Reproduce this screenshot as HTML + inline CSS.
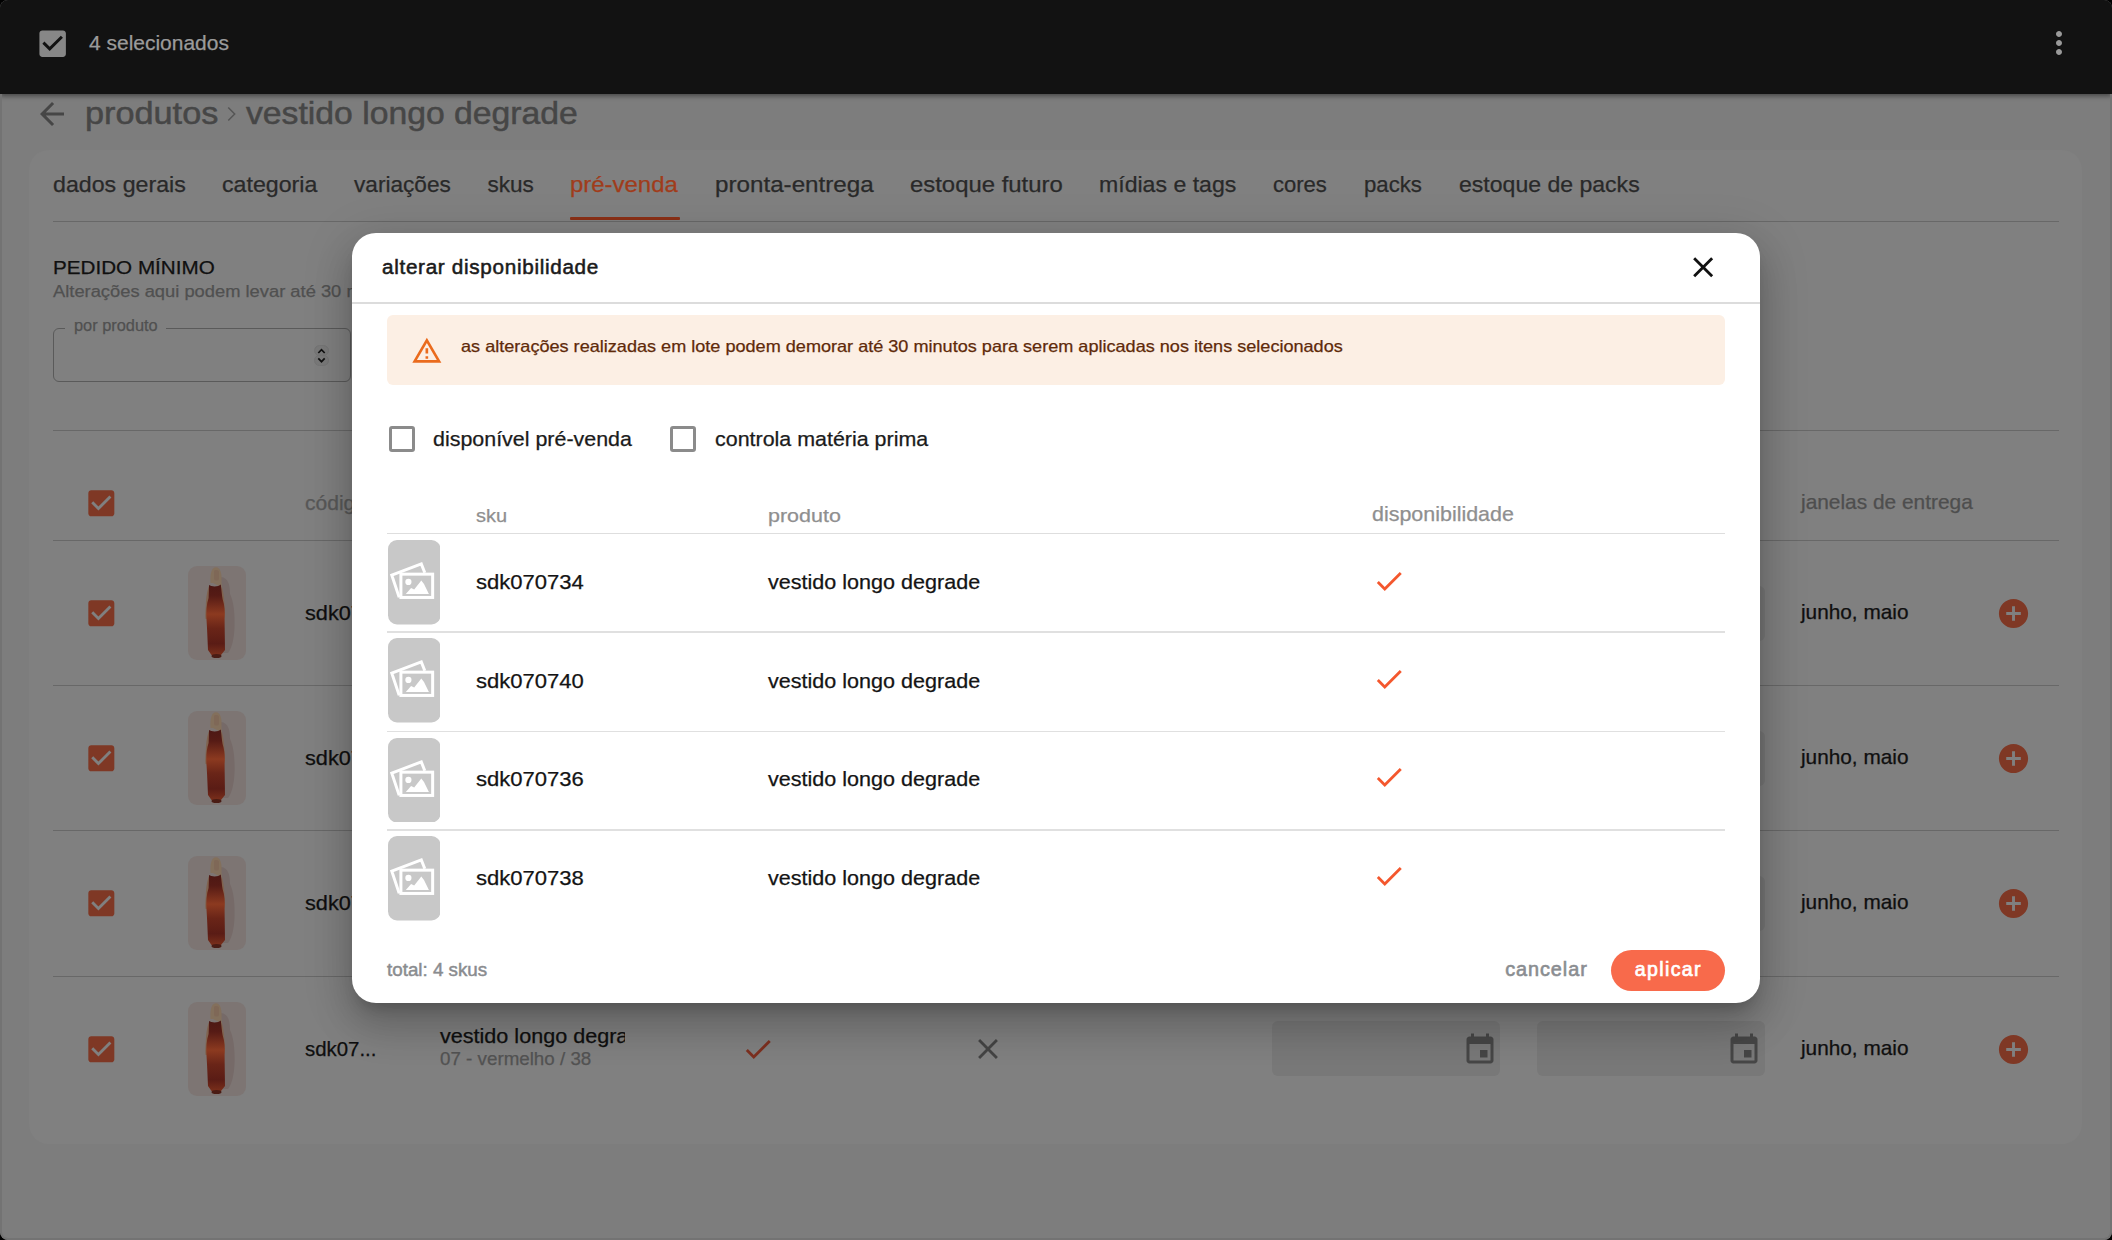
<!DOCTYPE html>
<html><head><meta charset="utf-8"><title>alterar disponibilidade</title>
<style>
html,body{margin:0;padding:0;background:#000;}
body{width:2112px;height:1240px;overflow:hidden;position:relative;font-family:"Liberation Sans",sans-serif;}
#screen{position:absolute;left:0;top:0;width:2112px;height:1240px;background:#7d7d7d;border-radius:8px;overflow:hidden;}
.abs{position:absolute;}
.t{position:absolute;white-space:nowrap;line-height:1;transform-origin:0 0;}
.clip{position:absolute;overflow:hidden;}
</style></head><body><div id="screen">
<div id="page">
<div class="abs" style="left:29px;top:150px;width:2053px;height:994px;background:#808080;border-radius:20px"></div>
<svg class="abs" style="left:34px;top:96px" width="36" height="36" viewBox="0 0 24 24"><path fill="#464646" d="M20 11H7.83l5.59-5.59L12 4l-8 8 8 8 1.41-1.41L7.83 13H20v-2z"/></svg>
<span class="t" style="left:84.80px;top:98.05px;font-size:31.49px;color:#464646;transform:scaleX(1.0881);-webkit-text-stroke:0.5px #464646;">produtos</span>
<span class="t" style="left:246.20px;top:98.05px;font-size:31.49px;color:#464646;transform:scaleX(1.0710);-webkit-text-stroke:0.5px #464646;">vestido longo degrade</span>
<svg class="abs" style="left:220px;top:103px" width="22" height="22" viewBox="0 0 24 24"><path fill="none" stroke="#555" stroke-width="1.6" d="M9 5l7 7-7 7"/></svg>
<span class="t" style="left:53.00px;top:173.60px;font-size:22.57px;color:#292929;transform:scaleX(1.0278);-webkit-text-stroke:0.25px #292929;">dados gerais</span>
<span class="t" style="left:222.00px;top:173.60px;font-size:22.57px;color:#292929;transform:scaleX(1.0269);-webkit-text-stroke:0.25px #292929;">categoria</span>
<span class="t" style="left:354.00px;top:173.60px;font-size:22.57px;color:#292929;transform:scaleX(1.0031);-webkit-text-stroke:0.25px #292929;">variações</span>
<span class="t" style="left:487.50px;top:173.60px;font-size:22.57px;color:#292929;-webkit-text-stroke:0.25px #292929;">skus</span>
<span class="t" style="left:570.00px;top:173.60px;font-size:22.57px;color:#a03c1b;transform:scaleX(1.0609);-webkit-text-stroke:0.25px #a03c1b;">pré-venda</span>
<span class="t" style="left:715.00px;top:173.60px;font-size:22.57px;color:#292929;transform:scaleX(1.0722);-webkit-text-stroke:0.25px #292929;">pronta-entrega</span>
<span class="t" style="left:910.00px;top:173.60px;font-size:22.57px;color:#292929;transform:scaleX(1.0588);-webkit-text-stroke:0.25px #292929;">estoque futuro</span>
<span class="t" style="left:1099.00px;top:173.60px;font-size:22.57px;color:#292929;transform:scaleX(1.0231);-webkit-text-stroke:0.25px #292929;">mídias e tags</span>
<span class="t" style="left:1273.00px;top:173.60px;font-size:22.57px;color:#292929;transform:scaleX(0.9765);-webkit-text-stroke:0.25px #292929;">cores</span>
<span class="t" style="left:1364.00px;top:173.60px;font-size:22.57px;color:#292929;transform:scaleX(0.9831);-webkit-text-stroke:0.25px #292929;">packs</span>
<span class="t" style="left:1459.00px;top:173.60px;font-size:22.57px;color:#292929;transform:scaleX(1.0214);-webkit-text-stroke:0.25px #292929;">estoque de packs</span>
<div class="abs" style="left:53px;top:221px;width:2006px;height:1px;background:#686868"></div>
<div class="abs" style="left:570px;top:217px;width:110px;height:3px;background:#8a3016;border-radius:1px"></div>
<span class="t" style="left:53.30px;top:259.19px;font-size:18.92px;color:#101010;transform:scaleX(1.0918);-webkit-text-stroke:0.25px #101010;">PEDIDO MÍNIMO</span>
<span class="t" style="left:53.30px;top:282.89px;font-size:17.03px;color:#505050;transform:scaleX(1.0770);-webkit-text-stroke:0.25px #505050;">Alterações aqui podem levar até 30 minutos para serem aplicadas</span>
<div class="abs" style="left:53px;top:328px;width:298px;height:54px;border:1.5px solid #5a5a5a;border-radius:6px;box-sizing:border-box"></div>
<div class="abs" style="left:65px;top:318px;width:101px;height:20px;background:#808080"></div>
<span class="t" style="left:73.50px;top:317.80px;font-size:15.95px;color:#505050;transform:scaleX(1.0271);-webkit-text-stroke:0.25px #505050;">por produto</span>
<svg class="abs" style="left:314px;top:345px" width="15" height="21" viewBox="0 0 15 21"><rect x="0.5" y="0.5" width="14" height="10" rx="5" fill="#7a7a7a" stroke="#747474" stroke-width="0.8"/><rect x="0.5" y="10.2" width="14" height="10.3" rx="5" fill="#7a7a7a" stroke="#747474" stroke-width="0.8"/><path d="M4.3 8l3.2-3.3 3.2 3.3M4.3 13.4l3.2 3.3 3.2-3.3" fill="none" stroke="#111" stroke-width="1.7"/></svg>
<div class="abs" style="left:53px;top:430px;width:2006px;height:1px;background:#686868"></div>
<div class="abs" style="left:53px;top:540px;width:2006px;height:1px;background:#686868"></div>
<div class="abs" style="left:53px;top:685px;width:2006px;height:1px;background:#686868"></div>
<div class="abs" style="left:53px;top:830.3px;width:2006px;height:1px;background:#686868"></div>
<div class="abs" style="left:53px;top:975.5px;width:2006px;height:1px;background:#686868"></div>
<svg class="abs" style="left:83.9px;top:485.97px" width="34.66" height="34.66" viewBox="0 0 24 24"><path fill="#7f3825" d="M19 3H5c-1.11 0-2 .9-2 2v14c0 1.1.89 2 2 2h14c1.11 0 2-.9 2-2V5c0-1.1-.89-2-2-2zm-9 14l-5-5 1.41-1.41L10 14.17l7.59-7.59L19 8l-9 9z"/></svg>
<span class="t" style="left:305.40px;top:493.64px;font-size:19.32px;color:#585858;transform:scaleX(1.0896);-webkit-text-stroke:0.25px #585858;">código</span>
<span class="t" style="left:1801.03px;top:492.91px;font-size:19.59px;color:#4e4e4e;transform:scaleX(1.0661);-webkit-text-stroke:0.25px #4e4e4e;">janelas de entrega</span>
<svg class="abs" style="left:83.9px;top:595.97px" width="34.66" height="34.66" viewBox="0 0 24 24"><path fill="#7f3825" d="M19 3H5c-1.11 0-2 .9-2 2v14c0 1.1.89 2 2 2h14c1.11 0 2-.9 2-2V5c0-1.1-.89-2-2-2zm-9 14l-5-5 1.41-1.41L10 14.17l7.59-7.59L19 8l-9 9z"/></svg>
<svg class="abs" style="left:188px;top:566px" width="58" height="94" viewBox="0 0 58 94"><defs><linearGradient id="dg613" x1="0" y1="0" x2="0" y2="1"><stop offset="0" stop-color="#4c1814"/><stop offset="0.16" stop-color="#561b15"/><stop offset="0.42" stop-color="#8c3a20"/><stop offset="0.62" stop-color="#6a2518"/><stop offset="0.84" stop-color="#5a1c15"/><stop offset="1" stop-color="#7a2f1b"/></linearGradient></defs><rect width="58" height="94" rx="9" fill="#7d7573"/><path d="M33 11 C40 12 42 18 42 28 C46 36 47 50 46.5 62 C46 72 44 82 40 87 L35 87 Z" fill="#766a68"/><path d="M32.5 19 C35 22 36 30 36.5 38 C37 44 37 49 36.5 52 L34.5 52 C34.5 45 34 36 32 28 Z" fill="#80634f"/><path d="M21.5 19 C19 24 18 33 17.8 40 C17.4 46 17 50 17.5 53 L19.5 53 C19.5 46 20 37 22 28 Z" fill="#80634f"/><path d="M22.5 17 C22 8 23.5 1.3 28 1.3 C32.5 1.3 34 8 33.5 15 C33.5 19 34 22 33 23 L31 20 L25 17 Z" fill="#83705c"/><path d="M26 5 C27 3.5 30 3.5 31 5.5 L31 13 C30 15 27 15 26 13 Z" fill="#7f6857"/><path d="M21 19 C23.5 21 30.5 21 32.8 18.5 C33.5 24 34 30 34.6 33 C36.8 40 37 46 36.6 52 C36.6 62 37 75 37 84 L33 89 L23.5 89 L20 84 C19.6 72 19 62 18.6 55 C17.8 46 18.5 38 20.6 32 C20.8 27 21 23 21 19 Z" fill="url(#dg613)"/><ellipse cx="28.5" cy="90" rx="5" ry="2" fill="#4a1c14"/></svg>
<span class="t" style="left:1801.03px;top:602.93px;font-size:19.46px;color:#0f0f0f;transform:scaleX(1.0691);-webkit-text-stroke:0.25px #0f0f0f;">junho, maio</span>
<svg class="abs" style="left:1996.1px;top:595.50px" width="35.04" height="35.04" viewBox="0 0 24 24"><path fill="#7f3825" d="M12 2C6.48 2 2 6.48 2 12s4.48 10 10 10 10-4.48 10-10S17.52 2 12 2zm5 11h-4v4h-2v-4H7v-2h4V7h2v4h4v2z"/></svg>
<svg class="abs" style="left:83.9px;top:740.97px" width="34.66" height="34.66" viewBox="0 0 24 24"><path fill="#7f3825" d="M19 3H5c-1.11 0-2 .9-2 2v14c0 1.1.89 2 2 2h14c1.11 0 2-.9 2-2V5c0-1.1-.89-2-2-2zm-9 14l-5-5 1.41-1.41L10 14.17l7.59-7.59L19 8l-9 9z"/></svg>
<svg class="abs" style="left:188px;top:711px" width="58" height="94" viewBox="0 0 58 94"><defs><linearGradient id="dg758" x1="0" y1="0" x2="0" y2="1"><stop offset="0" stop-color="#4c1814"/><stop offset="0.16" stop-color="#561b15"/><stop offset="0.42" stop-color="#8c3a20"/><stop offset="0.62" stop-color="#6a2518"/><stop offset="0.84" stop-color="#5a1c15"/><stop offset="1" stop-color="#7a2f1b"/></linearGradient></defs><rect width="58" height="94" rx="9" fill="#7d7573"/><path d="M33 11 C40 12 42 18 42 28 C46 36 47 50 46.5 62 C46 72 44 82 40 87 L35 87 Z" fill="#766a68"/><path d="M32.5 19 C35 22 36 30 36.5 38 C37 44 37 49 36.5 52 L34.5 52 C34.5 45 34 36 32 28 Z" fill="#80634f"/><path d="M21.5 19 C19 24 18 33 17.8 40 C17.4 46 17 50 17.5 53 L19.5 53 C19.5 46 20 37 22 28 Z" fill="#80634f"/><path d="M22.5 17 C22 8 23.5 1.3 28 1.3 C32.5 1.3 34 8 33.5 15 C33.5 19 34 22 33 23 L31 20 L25 17 Z" fill="#83705c"/><path d="M26 5 C27 3.5 30 3.5 31 5.5 L31 13 C30 15 27 15 26 13 Z" fill="#7f6857"/><path d="M21 19 C23.5 21 30.5 21 32.8 18.5 C33.5 24 34 30 34.6 33 C36.8 40 37 46 36.6 52 C36.6 62 37 75 37 84 L33 89 L23.5 89 L20 84 C19.6 72 19 62 18.6 55 C17.8 46 18.5 38 20.6 32 C20.8 27 21 23 21 19 Z" fill="url(#dg758)"/><ellipse cx="28.5" cy="90" rx="5" ry="2" fill="#4a1c14"/></svg>
<span class="t" style="left:1801.03px;top:747.93px;font-size:19.46px;color:#0f0f0f;transform:scaleX(1.0691);-webkit-text-stroke:0.25px #0f0f0f;">junho, maio</span>
<svg class="abs" style="left:1996.1px;top:740.50px" width="35.04" height="35.04" viewBox="0 0 24 24"><path fill="#7f3825" d="M12 2C6.48 2 2 6.48 2 12s4.48 10 10 10 10-4.48 10-10S17.52 2 12 2zm5 11h-4v4h-2v-4H7v-2h4V7h2v4h4v2z"/></svg>
<svg class="abs" style="left:83.9px;top:885.97px" width="34.66" height="34.66" viewBox="0 0 24 24"><path fill="#7f3825" d="M19 3H5c-1.11 0-2 .9-2 2v14c0 1.1.89 2 2 2h14c1.11 0 2-.9 2-2V5c0-1.1-.89-2-2-2zm-9 14l-5-5 1.41-1.41L10 14.17l7.59-7.59L19 8l-9 9z"/></svg>
<svg class="abs" style="left:188px;top:856px" width="58" height="94" viewBox="0 0 58 94"><defs><linearGradient id="dg903" x1="0" y1="0" x2="0" y2="1"><stop offset="0" stop-color="#4c1814"/><stop offset="0.16" stop-color="#561b15"/><stop offset="0.42" stop-color="#8c3a20"/><stop offset="0.62" stop-color="#6a2518"/><stop offset="0.84" stop-color="#5a1c15"/><stop offset="1" stop-color="#7a2f1b"/></linearGradient></defs><rect width="58" height="94" rx="9" fill="#7d7573"/><path d="M33 11 C40 12 42 18 42 28 C46 36 47 50 46.5 62 C46 72 44 82 40 87 L35 87 Z" fill="#766a68"/><path d="M32.5 19 C35 22 36 30 36.5 38 C37 44 37 49 36.5 52 L34.5 52 C34.5 45 34 36 32 28 Z" fill="#80634f"/><path d="M21.5 19 C19 24 18 33 17.8 40 C17.4 46 17 50 17.5 53 L19.5 53 C19.5 46 20 37 22 28 Z" fill="#80634f"/><path d="M22.5 17 C22 8 23.5 1.3 28 1.3 C32.5 1.3 34 8 33.5 15 C33.5 19 34 22 33 23 L31 20 L25 17 Z" fill="#83705c"/><path d="M26 5 C27 3.5 30 3.5 31 5.5 L31 13 C30 15 27 15 26 13 Z" fill="#7f6857"/><path d="M21 19 C23.5 21 30.5 21 32.8 18.5 C33.5 24 34 30 34.6 33 C36.8 40 37 46 36.6 52 C36.6 62 37 75 37 84 L33 89 L23.5 89 L20 84 C19.6 72 19 62 18.6 55 C17.8 46 18.5 38 20.6 32 C20.8 27 21 23 21 19 Z" fill="url(#dg903)"/><ellipse cx="28.5" cy="90" rx="5" ry="2" fill="#4a1c14"/></svg>
<span class="t" style="left:1801.03px;top:892.93px;font-size:19.46px;color:#0f0f0f;transform:scaleX(1.0691);-webkit-text-stroke:0.25px #0f0f0f;">junho, maio</span>
<svg class="abs" style="left:1996.1px;top:885.50px" width="35.04" height="35.04" viewBox="0 0 24 24"><path fill="#7f3825" d="M12 2C6.48 2 2 6.48 2 12s4.48 10 10 10 10-4.48 10-10S17.52 2 12 2zm5 11h-4v4h-2v-4H7v-2h4V7h2v4h4v2z"/></svg>
<svg class="abs" style="left:83.9px;top:1031.97px" width="34.66" height="34.66" viewBox="0 0 24 24"><path fill="#7f3825" d="M19 3H5c-1.11 0-2 .9-2 2v14c0 1.1.89 2 2 2h14c1.11 0 2-.9 2-2V5c0-1.1-.89-2-2-2zm-9 14l-5-5 1.41-1.41L10 14.17l7.59-7.59L19 8l-9 9z"/></svg>
<svg class="abs" style="left:188px;top:1002px" width="58" height="94" viewBox="0 0 58 94"><defs><linearGradient id="dg1049" x1="0" y1="0" x2="0" y2="1"><stop offset="0" stop-color="#4c1814"/><stop offset="0.16" stop-color="#561b15"/><stop offset="0.42" stop-color="#8c3a20"/><stop offset="0.62" stop-color="#6a2518"/><stop offset="0.84" stop-color="#5a1c15"/><stop offset="1" stop-color="#7a2f1b"/></linearGradient></defs><rect width="58" height="94" rx="9" fill="#7d7573"/><path d="M33 11 C40 12 42 18 42 28 C46 36 47 50 46.5 62 C46 72 44 82 40 87 L35 87 Z" fill="#766a68"/><path d="M32.5 19 C35 22 36 30 36.5 38 C37 44 37 49 36.5 52 L34.5 52 C34.5 45 34 36 32 28 Z" fill="#80634f"/><path d="M21.5 19 C19 24 18 33 17.8 40 C17.4 46 17 50 17.5 53 L19.5 53 C19.5 46 20 37 22 28 Z" fill="#80634f"/><path d="M22.5 17 C22 8 23.5 1.3 28 1.3 C32.5 1.3 34 8 33.5 15 C33.5 19 34 22 33 23 L31 20 L25 17 Z" fill="#83705c"/><path d="M26 5 C27 3.5 30 3.5 31 5.5 L31 13 C30 15 27 15 26 13 Z" fill="#7f6857"/><path d="M21 19 C23.5 21 30.5 21 32.8 18.5 C33.5 24 34 30 34.6 33 C36.8 40 37 46 36.6 52 C36.6 62 37 75 37 84 L33 89 L23.5 89 L20 84 C19.6 72 19 62 18.6 55 C17.8 46 18.5 38 20.6 32 C20.8 27 21 23 21 19 Z" fill="url(#dg1049)"/><ellipse cx="28.5" cy="90" rx="5" ry="2" fill="#4a1c14"/></svg>
<span class="t" style="left:1801.03px;top:1038.93px;font-size:19.46px;color:#0f0f0f;transform:scaleX(1.0691);-webkit-text-stroke:0.25px #0f0f0f;">junho, maio</span>
<svg class="abs" style="left:1996.1px;top:1031.50px" width="35.04" height="35.04" viewBox="0 0 24 24"><path fill="#7f3825" d="M12 2C6.48 2 2 6.48 2 12s4.48 10 10 10 10-4.48 10-10S17.52 2 12 2zm5 11h-4v4h-2v-4H7v-2h4V7h2v4h4v2z"/></svg>
<span class="t" style="left:305.00px;top:603.50px;font-size:19.73px;color:#0f0f0f;transform:scaleX(1.0996);-webkit-text-stroke:0.25px #0f0f0f;">sdk070734</span>
<span class="t" style="left:305.00px;top:748.50px;font-size:19.73px;color:#0f0f0f;transform:scaleX(1.0996);-webkit-text-stroke:0.25px #0f0f0f;">sdk070734</span>
<span class="t" style="left:305.00px;top:893.50px;font-size:19.73px;color:#0f0f0f;transform:scaleX(1.0996);-webkit-text-stroke:0.25px #0f0f0f;">sdk070734</span>
<span class="t" style="left:305.00px;top:1039.53px;font-size:19.46px;color:#0f0f0f;transform:scaleX(1.0498);-webkit-text-stroke:0.25px #0f0f0f;">sdk07...</span>
<div class="clip" style="left:439.00px;top:1016.53px;width:186.00px;height:37.24px"><span class="t" style="left:1.00px;top:10px;font-size:19.46px;color:#0f0f0f;transform:scaleX(1.1100);-webkit-text-stroke:0.25px #0f0f0f;">vestido longo degrade</span></div>
<span class="t" style="left:440.00px;top:1049.56px;font-size:18.24px;color:#535353;transform:scaleX(1.0293);-webkit-text-stroke:0.25px #535353;">07 - vermelho / 38</span>
<svg class="abs" style="left:741px;top:1032px" width="34" height="34" viewBox="0 0 24 24"><path fill="#7d3020" d="M9 16.17L4.83 12l-1.42 1.41L9 19 21 7l-1.41-1.41z"/></svg>
<svg class="abs" style="left:971px;top:1032px" width="34" height="34" viewBox="0 0 24 24"><path fill="#444" d="M19 6.41L17.59 5 12 10.59 6.41 5 5 6.41 10.59 12 5 17.59 6.41 19 12 13.41 17.59 19 19 17.59 13.41 12z"/></svg>
<div class="abs" style="left:1537px;top:585.5px;width:228px;height:55px;background:#787878;border-radius:6px"></div>
<div class="abs" style="left:1537px;top:730.5px;width:228px;height:55px;background:#787878;border-radius:6px"></div>
<div class="abs" style="left:1537px;top:875.5px;width:228px;height:55px;background:#787878;border-radius:6px"></div>
<div class="abs" style="left:1272px;top:1021px;width:228px;height:55px;background:#787878;border-radius:6px"></div>
<svg class="abs" style="left:1462px;top:1032px" width="36" height="36" viewBox="0 0 24 24"><path fill="#464646" d="M17 12h-5v5h5v-5zM16 1v2H8V1H6v2H5c-1.11 0-1.99.9-1.99 2L3 19c0 1.1.89 2 2 2h14c1.1 0 2-.9 2-2V5c0-1.1-.9-2-2-2h-1V1h-2zm3 18H5V8h14v11z"/></svg>
<div class="abs" style="left:1537px;top:1021px;width:228px;height:55px;background:#787878;border-radius:6px"></div>
<svg class="abs" style="left:1726px;top:1032px" width="36" height="36" viewBox="0 0 24 24"><path fill="#464646" d="M17 12h-5v5h5v-5zM16 1v2H8V1H6v2H5c-1.11 0-1.99.9-1.99 2L3 19c0 1.1.89 2 2 2h14c1.1 0 2-.9 2-2V5c0-1.1-.9-2-2-2h-1V1h-2zm3 18H5V8h14v11z"/></svg>
</div>
<div class="abs" style="left:0;top:0;width:2112px;height:94px;background:#121212;box-shadow:0 2px 5px rgba(0,0,0,0.45)"></div>
<svg class="abs" style="left:35.2px;top:25.5px" width="35.3" height="35.3" viewBox="0 0 24 24"><path fill="#878787" d="M19 3H5c-1.11 0-2 .9-2 2v14c0 1.1.89 2 2 2h14c1.11 0 2-.9 2-2V5c0-1.1-.89-2-2-2zm-9 14l-5-5 1.41-1.41L10 14.17l7.59-7.59L19 8l-9 9z"/></svg>
<span class="t" style="left:88.90px;top:33.04px;font-size:20.27px;color:#9b9b9b;transform:scaleX(1.0347);-webkit-text-stroke:0.25px #9b9b9b;">4 selecionados</span>
<svg class="abs" style="left:2041.2px;top:25.2px" width="36" height="36" viewBox="0 0 24 24"><path fill="#9a9a9a" d="M12 8c1.1 0 2-.9 2-2s-.9-2-2-2-2 .9-2 2 .9 2 2 2zm0 2c-1.1 0-2 .9-2 2s.9 2 2 2 2-.9 2-2-.9-2-2-2zm0 6c-1.1 0-2 .9-2 2s.9 2 2 2 2-.9 2-2-.9-2-2-2z"/></svg>
<div class="abs" style="left:352px;top:233px;width:1408px;height:770px;background:#fff;border-radius:24px;box-shadow:0 11px 15px -7px rgba(0,0,0,0.2),0 24px 38px 3px rgba(0,0,0,0.14),0 9px 46px 8px rgba(0,0,0,0.12)"></div>
<span class="t" style="left:382.00px;top:256.80px;font-size:20.68px;color:#1b1b1b;letter-spacing:0.691px;-webkit-text-stroke:0.55px #1b1b1b;">alterar disponibilidade</span>
<svg class="abs" style="left:1685.5px;top:250.3px" width="34.3" height="34.3" viewBox="0 0 24 24"><path fill="#111" d="M19 6.41L17.59 5 12 10.59 6.41 5 5 6.41 10.59 12 5 17.59 6.41 19 12 13.41 17.59 19 19 17.59 13.41 12z"/></svg>
<div class="abs" style="left:352px;top:302px;width:1408px;height:1.5px;background:#dcdcdc"></div>
<div class="abs" style="left:387.4px;top:315.3px;width:1337.6px;height:70px;background:#fcefe4;border-radius:6px"></div>
<svg class="abs" style="left:411px;top:334.6px" width="31.7" height="31.7" viewBox="0 0 24 24"><path fill="#ea6b1d" d="M12 5.99L19.53 19H4.47L12 5.99M12 2L1 21h22L12 2zm1 14h-2v2h2v-2zm0-6h-2v4h2v-4z"/></svg>
<span class="t" style="left:461.00px;top:339.40px;font-size:16.89px;color:#5f2a0a;transform:scaleX(1.0719);-webkit-text-stroke:0.25px #5f2a0a;">as alterações realizadas em lote podem demorar até 30 minutos para serem aplicadas nos itens selecionados</span>
<div class="abs" style="left:388.8px;top:426px;width:26px;height:26px;border:3px solid #8b8b8b;border-radius:3px;box-sizing:border-box"></div>
<span class="t" style="left:433.30px;top:429.04px;font-size:20.27px;color:#1b1b1b;transform:scaleX(1.0573);-webkit-text-stroke:0.25px #1b1b1b;">disponível pré-venda</span>
<div class="abs" style="left:670.4px;top:426px;width:26px;height:26px;border:3px solid #8b8b8b;border-radius:3px;box-sizing:border-box"></div>
<span class="t" style="left:715.40px;top:429.04px;font-size:20.27px;color:#1b1b1b;transform:scaleX(1.0574);-webkit-text-stroke:0.25px #1b1b1b;">controla matéria prima</span>
<span class="t" style="left:475.90px;top:506.61px;font-size:18.65px;color:#8f8f8f;transform:scaleX(1.0727);-webkit-text-stroke:0.25px #8f8f8f;">sku</span>
<span class="t" style="left:767.80px;top:506.61px;font-size:18.65px;color:#8f8f8f;transform:scaleX(1.1521);-webkit-text-stroke:0.25px #8f8f8f;">produto</span>
<span class="t" style="left:1371.50px;top:505.34px;font-size:19.32px;color:#8f8f8f;transform:scaleX(1.1104);-webkit-text-stroke:0.25px #8f8f8f;">disponibilidade</span>
<div class="abs" style="left:387px;top:532.5px;width:1338px;height:1.5px;background:#dedede"></div>
<svg class="abs" style="left:387.5px;top:540px" width="52.5" height="84.5" viewBox="0 0 52.5 84.5"><rect width="52.5" height="84.5" rx="9" fill="#c8c8c8"/><g fill="none" stroke="#fff" stroke-width="3" stroke-linejoin="miter"><path d="M11.2 57.4 L3.8 35.2 L33.3 23.9 L36.8 32.8"/><rect x="12.9" y="34.15" width="31.75" height="23.3"/></g><circle cx="20.4" cy="41.9" r="3.1" fill="#fff"/><path d="M17.8 53.9 L23.1 48.1 L26.2 49.5 L33.3 40.6 L36 44.1 L40.9 53.9 Z" fill="#fff"/></svg>
<span class="t" style="left:476.00px;top:572.44px;font-size:20.27px;color:#141414;transform:scaleX(1.0876);-webkit-text-stroke:0.25px #141414;">sdk070734</span>
<span class="t" style="left:767.80px;top:572.44px;font-size:20.27px;color:#141414;transform:scaleX(1.0636);-webkit-text-stroke:0.25px #141414;">vestido longo degrade</span>
<svg class="abs" style="left:1372.1px;top:563.6px" width="34" height="34" viewBox="0 0 24 24"><path fill="#f4572d" d="M9 16.17L4.83 12l-1.42 1.41L9 19 21 7l-1.41-1.41z"/></svg>
<div class="abs" style="left:387px;top:631.4px;width:1338px;height:1.5px;background:#e0e0e0"></div>
<svg class="abs" style="left:387.5px;top:638.4px" width="52.5" height="84.5" viewBox="0 0 52.5 84.5"><rect width="52.5" height="84.5" rx="9" fill="#c8c8c8"/><g fill="none" stroke="#fff" stroke-width="3" stroke-linejoin="miter"><path d="M11.2 57.4 L3.8 35.2 L33.3 23.9 L36.8 32.8"/><rect x="12.9" y="34.15" width="31.75" height="23.3"/></g><circle cx="20.4" cy="41.9" r="3.1" fill="#fff"/><path d="M17.8 53.9 L23.1 48.1 L26.2 49.5 L33.3 40.6 L36 44.1 L40.9 53.9 Z" fill="#fff"/></svg>
<span class="t" style="left:476.00px;top:671.04px;font-size:20.27px;color:#141414;transform:scaleX(1.0876);-webkit-text-stroke:0.25px #141414;">sdk070740</span>
<span class="t" style="left:767.80px;top:671.04px;font-size:20.27px;color:#141414;transform:scaleX(1.0636);-webkit-text-stroke:0.25px #141414;">vestido longo degrade</span>
<svg class="abs" style="left:1372.1px;top:662.2px" width="34" height="34" viewBox="0 0 24 24"><path fill="#f4572d" d="M9 16.17L4.83 12l-1.42 1.41L9 19 21 7l-1.41-1.41z"/></svg>
<div class="abs" style="left:387px;top:730.5px;width:1338px;height:1.5px;background:#e0e0e0"></div>
<svg class="abs" style="left:387.5px;top:737.5px" width="52.5" height="84.5" viewBox="0 0 52.5 84.5"><rect width="52.5" height="84.5" rx="9" fill="#c8c8c8"/><g fill="none" stroke="#fff" stroke-width="3" stroke-linejoin="miter"><path d="M11.2 57.4 L3.8 35.2 L33.3 23.9 L36.8 32.8"/><rect x="12.9" y="34.15" width="31.75" height="23.3"/></g><circle cx="20.4" cy="41.9" r="3.1" fill="#fff"/><path d="M17.8 53.9 L23.1 48.1 L26.2 49.5 L33.3 40.6 L36 44.1 L40.9 53.9 Z" fill="#fff"/></svg>
<span class="t" style="left:476.00px;top:769.14px;font-size:20.27px;color:#141414;transform:scaleX(1.0876);-webkit-text-stroke:0.25px #141414;">sdk070736</span>
<span class="t" style="left:767.80px;top:769.14px;font-size:20.27px;color:#141414;transform:scaleX(1.0636);-webkit-text-stroke:0.25px #141414;">vestido longo degrade</span>
<svg class="abs" style="left:1372.1px;top:760.3px" width="34" height="34" viewBox="0 0 24 24"><path fill="#f4572d" d="M9 16.17L4.83 12l-1.42 1.41L9 19 21 7l-1.41-1.41z"/></svg>
<div class="abs" style="left:387px;top:829.3px;width:1338px;height:1.5px;background:#e0e0e0"></div>
<svg class="abs" style="left:387.5px;top:836.3px" width="52.5" height="84.5" viewBox="0 0 52.5 84.5"><rect width="52.5" height="84.5" rx="9" fill="#c8c8c8"/><g fill="none" stroke="#fff" stroke-width="3" stroke-linejoin="miter"><path d="M11.2 57.4 L3.8 35.2 L33.3 23.9 L36.8 32.8"/><rect x="12.9" y="34.15" width="31.75" height="23.3"/></g><circle cx="20.4" cy="41.9" r="3.1" fill="#fff"/><path d="M17.8 53.9 L23.1 48.1 L26.2 49.5 L33.3 40.6 L36 44.1 L40.9 53.9 Z" fill="#fff"/></svg>
<span class="t" style="left:476.00px;top:867.94px;font-size:20.27px;color:#141414;transform:scaleX(1.0876);-webkit-text-stroke:0.25px #141414;">sdk070738</span>
<span class="t" style="left:767.80px;top:867.94px;font-size:20.27px;color:#141414;transform:scaleX(1.0636);-webkit-text-stroke:0.25px #141414;">vestido longo degrade</span>
<svg class="abs" style="left:1372.1px;top:859.1px" width="34" height="34" viewBox="0 0 24 24"><path fill="#f4572d" d="M9 16.17L4.83 12l-1.42 1.41L9 19 21 7l-1.41-1.41z"/></svg>
<span class="t" style="left:387.00px;top:961.93px;font-size:17.57px;color:#8a8c8f;transform:scaleX(1.0692);-webkit-text-stroke:0.45px #8a8c8f;">total: 4 skus</span>
<span class="t" style="left:1505.20px;top:959.93px;font-size:19.86px;color:#8a8d91;letter-spacing:0.929px;-webkit-text-stroke:0.6px #8a8d91;">cancelar</span>
<div class="abs" style="left:1611px;top:950.3px;width:113.6px;height:40.7px;background:#f86a4b;border-radius:21px"></div>
<span class="t" style="left:1634.80px;top:960.31px;font-size:19.59px;color:#ffffff;letter-spacing:1.350px;-webkit-text-stroke:0.7px #ffffff;">aplicar</span>
<div class="abs" style="left:0;top:94px;width:2112px;height:1146px;box-sizing:border-box;border:2px solid #737373;border-top:0;border-radius:0 0 8px 8px;pointer-events:none"></div>
</div></body></html>
